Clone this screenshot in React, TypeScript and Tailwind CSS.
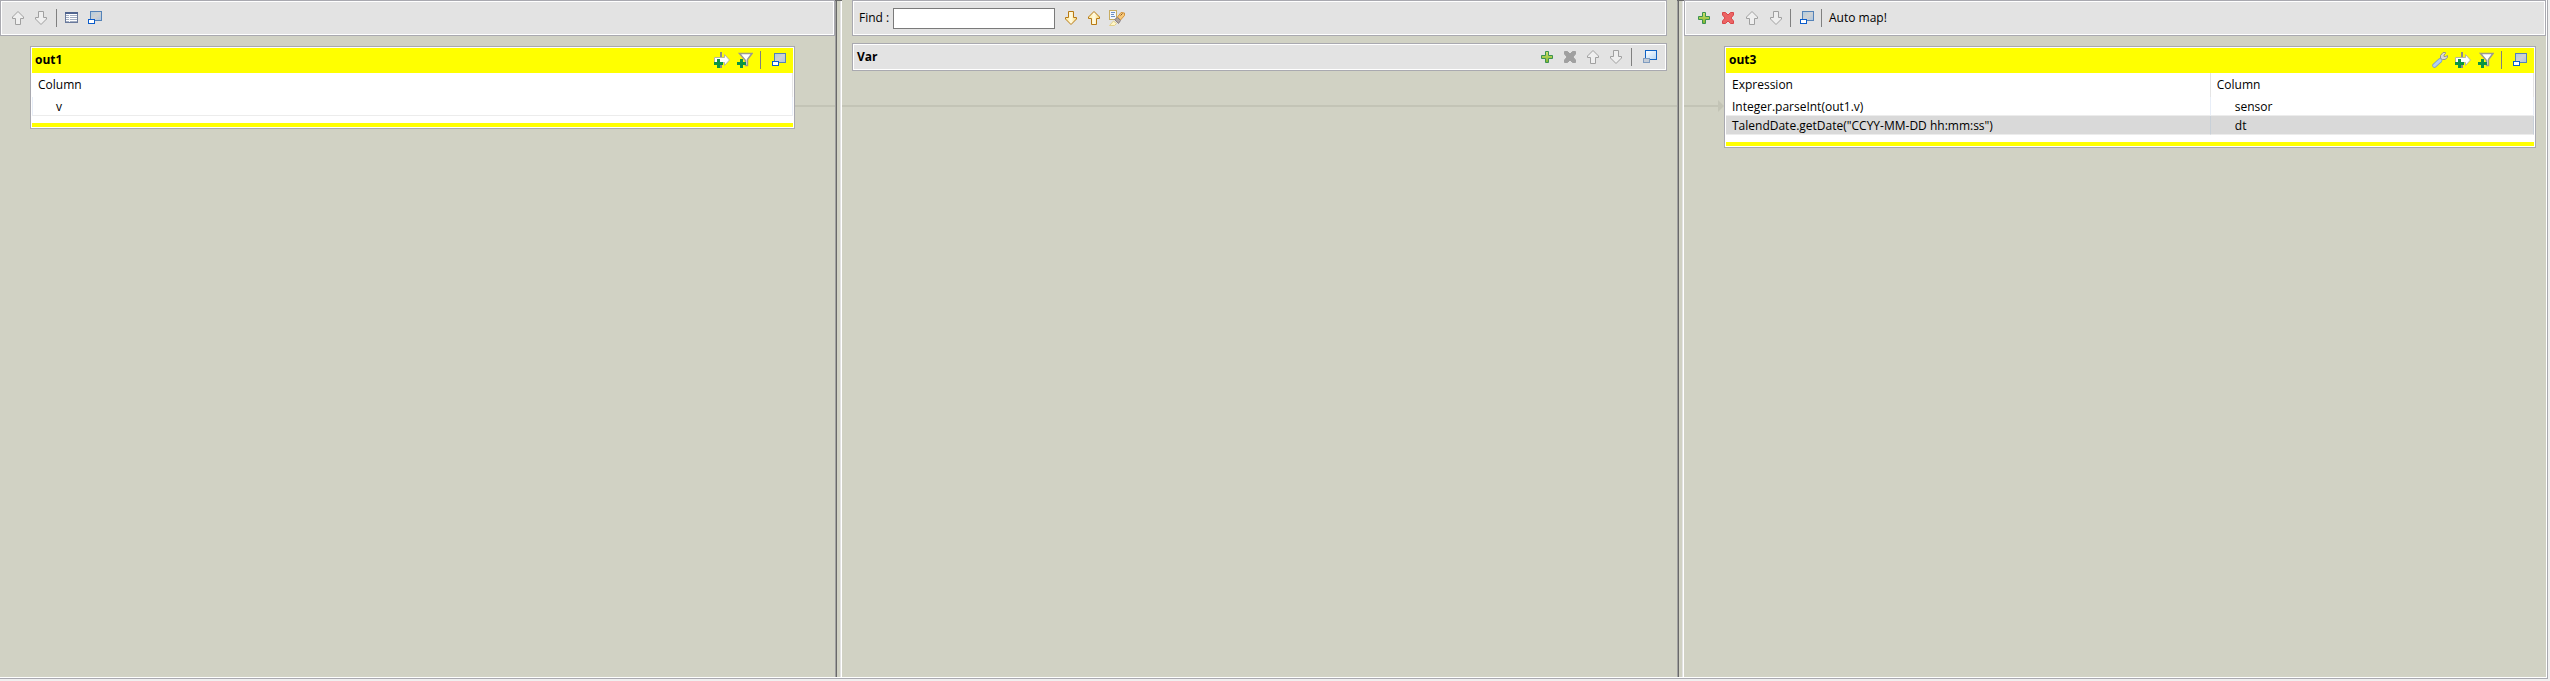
import type { ReactNode } from "react";

function Svg({ children }: { children: ReactNode }) {
  return (
    <svg viewBox="0 0 16 16" className="size-4 shrink-0" aria-hidden="true">
      {children}
    </svg>
  );
}

const UP = "M8 1.5 L13.5 7 V8.5 H10.5 V14.5 H5.5 V8.5 H2.5 V7 Z";
const DOWN = "M8 14.5 L13.5 9 V7.5 H10.5 V1.5 H5.5 V7.5 H2.5 V9 Z";

function GrayArrow({ down }: { down?: boolean }) {
  return (
    <Svg>
      <path d={down ? DOWN : UP} fill="#efefef" stroke="#a0a0a0" />
    </Svg>
  );
}

function GoldArrow({ down }: { down?: boolean }) {
  return (
    <Svg>
      <defs>
        <linearGradient id={down ? "goldDown" : "goldUp"} x1="0" x2="1">
          <stop offset="0.2" stopColor="#fdeeb0" />
          <stop offset="0.5" stopColor="#fffbe6" />
          <stop offset="0.9" stopColor="#fbe08c" />
        </linearGradient>
      </defs>
      <path d={down ? DOWN : UP} fill={down ? "url(#goldDown)" : "url(#goldUp)"} stroke="#b87a14" />
    </Svg>
  );
}

function PlusIcon() {
  return (
    <Svg>
      <defs>
        <linearGradient id="plusFill" x1="0" x2="0" y1="0" y2="1">
          <stop offset="0" stopColor="#d3e36c" />
          <stop offset="1" stopColor="#7fb52e" />
        </linearGradient>
      </defs>
      <path
        d="M6.5 2.5 H9.5 V6.5 H13.5 V9.5 H9.5 V13.5 H6.5 V9.5 H2.5 V6.5 H6.5 Z"
        fill="url(#plusFill)"
        stroke="#3c9350"
      />
    </Svg>
  );
}

function CrossIcon({ gray }: { gray?: boolean }) {
  return (
    <Svg>
      <path
        d="M2.5 2.5 H5.5 L8 5 L10.5 2.5 H13.5 V5 L11 8 L13.5 11 V13.5 H10.5 L8 11 L5.5 13.5 H2.5 V11 L5 8 L2.5 5 Z"
        fill={gray ? "#a0a0a0" : "#ec6464"}
        stroke={gray ? "#a0a0a0" : "#d9474a"}
      />
    </Svg>
  );
}

function GridIcon() {
  return (
    <Svg>
      <rect x="1.5" y="2.5" width="12" height="10" fill="#fff" stroke="#6a7a9c" />
      <rect x="1" y="2" width="13" height="2" fill="#50648f" />
      <path d="M2 5.5 H13 M2 7.5 H13 M2 9.5 H13 M2 11.5 H13" stroke="#a3aec2" />
      <path d="M5.5 4 V12" stroke="#f4f6fa" />
    </Svg>
  );
}

function WindowIcon({ active }: { active?: boolean }) {
  return (
    <Svg>
      <defs>
        <linearGradient id="paneOn" x1="0" y1="0" x2="1" y2="1">
          <stop offset="0" stopColor="#ffffff" />
          <stop offset="1" stopColor="#b5d6f4" />
        </linearGradient>
        <linearGradient id="paneOff" x1="0" y1="0" x2="1" y2="1">
          <stop offset="0" stopColor="#aecbe0" />
          <stop offset="0.5" stopColor="#d0d2d2" />
          <stop offset="1" stopColor="#a9c4e2" />
        </linearGradient>
      </defs>
      <rect
        x="3.5"
        y="1.5"
        width="11"
        height="9"
        fill={active ? "url(#paneOn)" : "url(#paneOff)"}
        stroke={active ? "#0f62c4" : "#5583b8"}
      />
      <rect
        x="1.5"
        y="9.5"
        width="6"
        height="4"
        fill={active ? "#c4ccd6" : "#ffffff"}
        stroke={active ? "#7f9cc0" : "#0a5ccb"}
      />
    </Svg>
  );
}

function GreenPlus() {
  return <path d="M3 7 H6 V10 H9 V13 H6 V16 H3 V13 H0 V10 H3 Z" fill="#0a9444" />;
}

function AddColumnIcon() {
  return (
    <Svg>
      <path d="M7 0 V16" stroke="#8c8c8c" strokeWidth="2" />
      <path d="M0.5 5.5 H10.5 V2.5 L15.5 8 L10.5 13.5 V10.5 H0.5 Z" fill="#fff" stroke="#b8b8a0" />
      <path d="M7 2 V5" stroke="#8c8c8c" strokeWidth="2" />
      <GreenPlus />
    </Svg>
  );
}

function AddFilterIcon() {
  return (
    <Svg>
      <path d="M2.5 1.5 H15 L10.5 7.5 V13.5 H8.5 V8.5 Z" fill="#fff" stroke="#9a9a90" strokeWidth="1.5" />
      <GreenPlus />
    </Svg>
  );
}

function WrenchIcon() {
  return (
    <Svg>
      <path
        d="M8.5 6.5 V3.5 L11 0.5 H13.5 V1.5 L12 3 V4.5 H13.5 L15.5 3.5 V5.5 L13 7.5 H10.5 Z"
        fill="#d9d9d4"
        stroke="#94948c"
      />
      <path d="M8 8.5 L2.5 13.5" stroke="#7ea2cc" strokeWidth="4.5" strokeLinecap="round" />
      <path d="M8 8.5 L2.5 13.5" stroke="#b2cff2" strokeWidth="3" strokeLinecap="round" />
    </Svg>
  );
}

function HighlightIcon() {
  return (
    <Svg>
      <rect x="0.5" y="0.5" width="7" height="9" fill="#f4f8fd" stroke="#c8ad62" />
      <path d="M2 2.5 H6 M2 4.5 H5 M2 6.5 H6" stroke="#6c8fc4" />
      <path d="M8.5 7 L12 2.5 L15.5 3 V5.5 L11.5 10 Z" fill="#f8c878" stroke="#d2933a" />
      <path d="M11.5 5.5 L13.5 3.5" stroke="#8a5a28" />
      <path d="M5.5 9.5 L8.5 7.5 L11.5 10.5 L9.5 13.5 Z" fill="#aea49e" stroke="#8b7f80" />
      <path d="M0.5 15.5 L4.5 11 L7.5 13.5 L5.5 15.5 Z" fill="#fff6c8" stroke="#e2cf8a" />
    </Svg>
  );
}

function ToolButton({ label, children }: { label: string; children: ReactNode }) {
  return (
    <button type="button" title={label} aria-label={label} className="block shrink-0">
      {children}
    </button>
  );
}

function Rule({ className = "" }: { className?: string }) {
  return <span className={`h-[18px] w-px shrink-0 bg-[#808080] ${className}`} />;
}

function Toolbar({ children }: { children: ReactNode }) {
  return (
    <div className="border border-[#a9a9b0] bg-white p-px">
      <div className="flex h-8 items-center bg-[#e3e3e3]">{children}</div>
    </div>
  );
}

function Sash() {
  return (
    <div className="flex w-[7px] shrink-0 border-t border-[#696969]">
      <span className="w-px bg-[#a0a0a0]" />
      <span className="w-px bg-[#696969]" />
      <span className="flex-1" />
      <span className="w-px bg-[#e3e3e3]" />
      <span className="w-px bg-white" />
    </div>
  );
}

function Card({ title, tools, children }: { title: string; tools: ReactNode; children: ReactNode }) {
  return (
    <section className="relative border border-[#a9a9b0] bg-white p-px">
      <header className="flex h-[25px] items-center justify-between bg-[#ffff00] pr-1.5 pl-[3px]">
        <h2 className="pb-0.5 font-bold">{title}</h2>
        <div className="flex items-center gap-[7px] pb-0.5">{tools}</div>
      </header>
      {children}
      <div className="mt-[7px] h-1 bg-[#ffff00]" />
    </section>
  );
}

export default function App() {
  return (
    <main className="flex h-screen flex-col bg-[#f0f0f0] pr-0.5 pb-0.5 font-['Open_Sans','Noto_Sans',sans-serif] text-[12px] leading-4 text-black">
      <div className="flex flex-1 border-r border-b border-[#a9a9b0] bg-white pr-px pb-px">
        <div className="flex flex-1 bg-[#d1d2c4]">
          <div className="relative min-w-0 flex-[835_1_0%]">
            <Toolbar>
              <div className="flex items-center gap-[7px] pl-2">
                <ToolButton label="Move up"><GrayArrow /></ToolButton>
                <ToolButton label="Move down"><GrayArrow down /></ToolButton>
                <Rule />
                <ToolButton label="Property settings"><GridIcon /></ToolButton>
                <ToolButton label="Minimize all"><WindowIcon /></ToolButton>
              </div>
            </Toolbar>
            <div className="absolute top-[105px] right-0 h-0.5 w-10 bg-[#c3c4b6]" />
            <div className="pt-2.5 pr-10 pl-[30px]">
              <Card
                title="out1"
                tools={
                  <>
                    <ToolButton label="Activate expression filter"><AddColumnIcon /></ToolButton>
                    <ToolButton label="Add filter"><AddFilterIcon /></ToolButton>
                    <Rule className="mr-[3px]" />
                    <ToolButton label="Minimize"><WindowIcon /></ToolButton>
                  </>
                }
              >
                <table className="w-full border-separate border-spacing-0 text-left">
                  <thead>
                    <tr className="h-6">
                      <th className="border-r border-[#e5e5e5] py-0 pl-1.5 font-normal">Column</th>
                    </tr>
                  </thead>
                  <tbody>
                    <tr className="h-[19px]">
                      <td className="border-x border-b border-x-[#e8eef8] border-b-[#ececec] pt-0.5 pb-0 pl-[23px]">v</td>
                    </tr>
                  </tbody>
                </table>
              </Card>
            </div>
          </div>
          <Sash />
          <div className="relative min-w-0 flex-[835_1_0%]">
            <div className="px-2.5">
              <Toolbar>
                <label htmlFor="find" className="w-[39px] shrink-0 pl-[5px] whitespace-nowrap">Find :</label>
                <input
                  id="find"
                  type="text"
                  className="h-[21px] w-[162px] border border-[#7a7a7a] bg-white px-1 outline-none"
                />
                <div className="flex items-center gap-[7px] pl-2">
                  <ToolButton label="Find next"><GoldArrow down /></ToolButton>
                  <ToolButton label="Find previous"><GoldArrow /></ToolButton>
                  <ToolButton label="Highlight all"><HighlightIcon /></ToolButton>
                </div>
              </Toolbar>
              <section className="mt-[7px] border border-[#a9a9b0] bg-white p-px">
                <header className="flex h-6 items-center justify-between bg-[#e3e3e3] pr-[7px] pl-[3px]">
                  <h2 className="font-bold">Var</h2>
                  <div className="flex items-center gap-[7px]">
                    <ToolButton label="Add variable"><PlusIcon /></ToolButton>
                    <ToolButton label="Remove variable"><CrossIcon gray /></ToolButton>
                    <ToolButton label="Move variable up"><GrayArrow /></ToolButton>
                    <ToolButton label="Move variable down"><GrayArrow down /></ToolButton>
                    <Rule className="mr-[3px]" />
                    <ToolButton label="Restore"><WindowIcon active /></ToolButton>
                  </div>
                </header>
              </section>
            </div>
            <div className="absolute top-[105px] right-0 left-0 h-0.5 bg-[#c3c4b6]" />
          </div>
          <Sash />
          <div className="relative min-w-0 flex-[862_1_0%]">
            <Toolbar>
              <div className="flex items-center gap-2 pl-2.5">
                <ToolButton label="Add output"><PlusIcon /></ToolButton>
                <ToolButton label="Remove output"><CrossIcon /></ToolButton>
                <ToolButton label="Move output up"><GrayArrow /></ToolButton>
                <ToolButton label="Move output down"><GrayArrow down /></ToolButton>
                <Rule className="-ml-0.5" />
                <ToolButton label="Minimize all outputs"><WindowIcon /></ToolButton>
                <Rule className="-ml-0.5" />
                <button type="button" className="-ml-px">Auto map!</button>
              </div>
            </Toolbar>
            <div className="absolute top-[100px] left-0 flex w-10 items-center">
              <span className="h-0.5 flex-1 bg-[#c3c4b6]" />
              <svg viewBox="0 0 6 12" className="h-3 w-1.5" aria-hidden="true">
                <path d="M0 0 L6 6 L0 12 Z" fill="#c3c4b6" />
              </svg>
            </div>
            <div className="pt-2.5 pr-2.5 pl-10">
              <Card
                title="out3"
                tools={
                  <>
                    <ToolButton label="Table settings"><WrenchIcon /></ToolButton>
                    <ToolButton label="Activate output filter"><AddColumnIcon /></ToolButton>
                    <ToolButton label="Add output filter"><AddFilterIcon /></ToolButton>
                    <Rule className="mr-[3px]" />
                    <ToolButton label="Minimize output"><WindowIcon /></ToolButton>
                  </>
                }
              >
                <table className="w-full table-fixed border-separate border-spacing-0 text-left">
                  <thead>
                    <tr className="h-6">
                      <th className="w-3/5 border-r border-[#e5e5e5] py-0 pl-1.5 font-normal">Expression</th>
                      <th className="border-r border-[#e5e5e5] py-0 pl-1.5 font-normal">Column</th>
                    </tr>
                  </thead>
                  <tbody>
                    <tr className="h-[19px]">
                      <td className="border-r border-b border-r-[#e8eef8] border-b-[#ececec] pt-0.5 pb-0 pl-1.5">
                        Integer.parseInt(out1.v)
                      </td>
                      <td className="border-r border-b border-r-[#e8eef8] border-b-[#ececec] pt-0.5 pb-0 pl-6">sensor</td>
                    </tr>
                    <tr className="h-[19px] bg-[#d9d9d9]">
                      <td className="border-r border-b border-r-[#c8d0d8] border-b-[#ececec] pt-0.5 pb-0 pl-1.5">
                        TalendDate.getDate("CCYY-MM-DD hh:mm:ss")
                      </td>
                      <td className="border-r border-b border-r-[#c8d0d8] border-b-[#ececec] pt-0.5 pb-0 pl-6">dt</td>
                    </tr>
                  </tbody>
                </table>
              </Card>
            </div>
          </div>
        </div>
      </div>
    </main>
  );
}
